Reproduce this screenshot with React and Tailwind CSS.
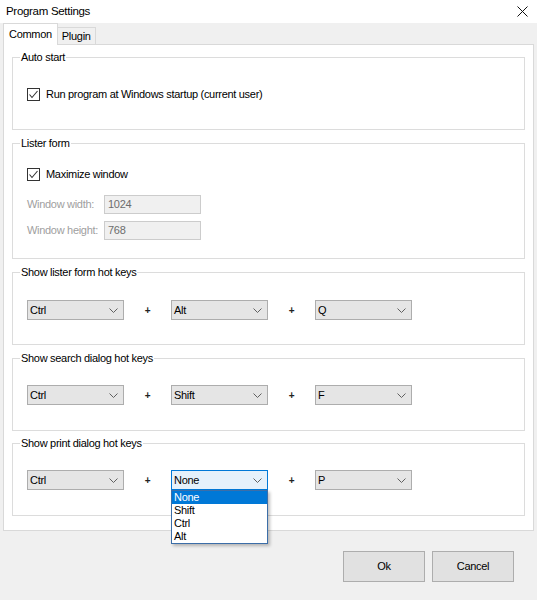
import React from 'react';

const Chevron = () => (
  <svg width="9" height="5" viewBox="0 0 9 5" className="shrink-0">
    <polyline points="0.5,0.5 4.5,4.5 8.5,0.5" fill="none" stroke="#606060" strokeWidth="1" />
  </svg>
);

const CheckBox = ({ label }) => (
  <div className="flex items-center h-[13px]">
    <div className="w-[13px] h-[13px] border border-[#333333] bg-white flex items-center justify-center">
      <svg width="11" height="11" viewBox="0 0 11 11">
        <polyline points="1.5,5.5 4,8.5 9.5,2" fill="none" stroke="#333333" strokeWidth="1.1" />
      </svg>
    </div>
    <span className="ml-[6px] text-black">{label}</span>
  </div>
);

const Combo = ({ value, open }) => (
  <div
    className={`w-[97px] h-[20px] border flex items-center justify-between pl-[2px] pr-[5px] ${
      open ? 'bg-[#e5f1fb] border-[#0078d7]' : 'bg-[#e5e5e5] border-[#adadad]'
    }`}
  >
    <span className="text-black">{value}</span>
    <Chevron />
  </div>
);

const Plus = () => (
  <div className="w-[47px] text-center font-bold text-[#222] text-[10px]">+</div>
);

const GroupBox = ({ title, className, children }) => (
  <div className={`relative border border-[#dcdcdc] ${className}`}>
    <span className="absolute -top-[8px] left-[7px] px-[1px] bg-white leading-[14px] text-black">{title}</span>
    {children}
  </div>
);

const HotKeys = ({ title, keys, openIndex, className }) => (
  <GroupBox title={title} className={`h-[73px] pl-[14px] ${className}`}>
    <div className="flex items-center">
      {keys.map((k, i) => (
        <React.Fragment key={i}>
          {i > 0 && <Plus />}
          <div className="relative">
            <Combo value={k} open={i === openIndex} />
            {i === openIndex && (
              <div className="absolute left-0 top-[20px] w-[97px] bg-white border border-[#3c6ea8] shadow-[2px_2px_3px_rgba(0,0,0,0.25)] z-20">
                {['None', 'Shift', 'Ctrl', 'Alt'].map((o, j) => (
                  <div
                    key={o}
                    className={`h-[13px] leading-[13px] pl-[2px] ${j === 0 ? 'bg-[#0078d7] text-white' : 'text-black'}`}
                  >
                    {o}
                  </div>
                ))}
              </div>
            )}
          </div>
        </React.Fragment>
      ))}
    </div>
  </GroupBox>
);

export default function App() {
  return (
    <div className="w-[537px] h-[600px] bg-[#f0f0f0] flex flex-col text-[11px] tracking-[-0.3px] font-['Liberation_Sans',Arial,sans-serif] text-black overflow-hidden">
      {/* title bar */}
      <div className="h-[23px] bg-white flex items-center justify-between pl-[6px] pr-[9px] shrink-0">
        <span className="text-[11.5px]">Program Settings</span>
        <svg width="11" height="11" viewBox="0 0 11 11">
          <path d="M0.5 0.5 L10.5 10.5 M10.5 0.5 L0.5 10.5" stroke="#111" strokeWidth="1" />
        </svg>
      </div>

      {/* tabs */}
      <div className="h-[21px] flex items-end pl-[3px] shrink-0">
        <div className="relative z-10 h-[22px] -mb-px px-[5px] bg-white border border-b-0 border-[#d9d9d9] flex items-center">
          Common
        </div>
        <div className="h-[17px] px-[4px] bg-[#f0f0f0] border border-b-0 border-l-0 border-[#d9d9d9] flex items-center">
          Plugin
        </div>
      </div>

      {/* panel */}
      <div className="mx-[3px] w-[531px] h-[487px] bg-white border border-[#d9d9d9] pt-[12px] px-[8px] flex flex-col shrink-0">
        <GroupBox title="Auto start" className="h-[73px] pt-[30px] pl-[14px]">
          <CheckBox label="Run program at Windows startup (current user)" />
        </GroupBox>

        <GroupBox title="Lister form" className="mt-[13px] h-[116px] pt-[24px] pl-[14px]">
          <CheckBox label="Maximize window" />
          <div className="mt-[14px] flex items-center h-[19px]">
            <span className="w-[77px] text-[#a0a0a0]">Window width:</span>
            <div className="w-[97px] h-[19px] bg-[#f0f0f0] border border-[#cccccc] flex items-center pl-[3px] text-[#6d6d6d]">1024</div>
          </div>
          <div className="mt-[7px] flex items-center h-[19px]">
            <span className="w-[77px] text-[#a0a0a0]">Window height:</span>
            <div className="w-[97px] h-[19px] bg-[#f0f0f0] border border-[#cccccc] flex items-center pl-[3px] text-[#6d6d6d]">768</div>
          </div>
        </GroupBox>

        <HotKeys title="Show lister form hot keys" keys={['Ctrl', 'Alt', 'Q']} className="mt-[13px] pt-[27px]" />
        <HotKeys title="Show search dialog hot keys" keys={['Ctrl', 'Shift', 'F']} className="mt-[13px] pt-[26px]" />
        <HotKeys title="Show print dialog hot keys" keys={['Ctrl', 'None', 'P']} openIndex={1} className="mt-[12px] pt-[26px]" />
      </div>

      {/* buttons */}
      <div className="flex justify-end gap-[7px] pr-[23px] mt-[20px]">
        <button className="w-[82px] h-[31px] bg-[#e1e1e1] border border-[#adadad] text-black">Ok</button>
        <button className="w-[82px] h-[31px] bg-[#e1e1e1] border border-[#adadad] text-black">Cancel</button>
      </div>
    </div>
  );
}
